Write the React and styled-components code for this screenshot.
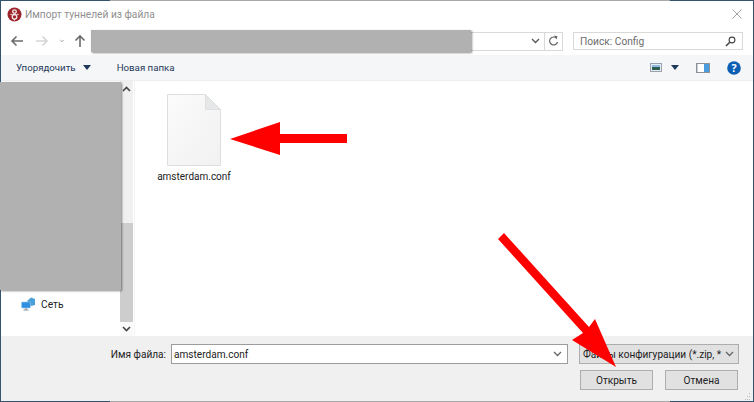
import React from 'react';
import styled, { createGlobalStyle } from 'styled-components';

const Global = createGlobalStyle`
  html, body { margin: 0; padding: 0; background: #34536f; }
  body { font-family: "Roboto", "Open Sans", sans-serif; }
`;

const Screen = styled.div`
  position: relative;
  width: 754px;
  height: 402px;
  overflow: hidden;
  padding: 1px;
  box-sizing: border-box;
  background: linear-gradient(to right, #34536f 110px, #a9a9a9 110px, #a9a9a9 670px, #34536f 670px);
`;

const Dialog = styled.div`
  display: flex;
  flex-direction: column;
  width: 752px;
  height: 400px;
  background: #fff;
`;

const TitleBar = styled.div`
  display: flex;
  align-items: center;
  height: 26px;
  flex: none;
  padding: 0 11px 0 6px;
  gap: 3px;
  font-size: 10.2px;
  color: #8f8f8f;
`;

const TitleText = styled.span`
  flex: 1;
`;

const NavRow = styled.div`
  display: flex;
  align-items: center;
  height: 28px;
  flex: none;
  padding: 0 10px 0 9px;
`;

const NavIcons = styled.div`
  display: flex;
  align-items: center;
  width: 81px;
  flex: none;
`;

const NavSlot = styled.span`
  display: flex;
  justify-content: center;
  box-sizing: border-box;
  width: ${p => p.$w}px;
  padding-left: ${p => p.$shift || 0}px;
`;

const AddressBar = styled.div`
  display: flex;
  justify-content: flex-end;
  align-items: center;
  width: 470px;
  flex: none;
  height: 17px;
  border: 1px solid #d9d9d9;
  background: #fff;
`;

const AddressButton = styled.span`
  display: flex;
  align-items: center;
  justify-content: center;
  width: ${p => p.$w}px;
  height: 17px;
  border-left: ${p => (p.$line ? '1px solid #d9d9d9' : 'none')};
`;

const SearchBox = styled.div`
  display: flex;
  align-items: center;
  justify-content: space-between;
  box-sizing: border-box;
  width: 171px;
  height: 18px;
  margin-left: 10px;
  padding: 0 6px;
  border: 1px solid #d9d9d9;
  font-size: 10.2px;
  color: #6d6d6d;
`;

const Toolbar = styled.div`
  display: flex;
  align-items: center;
  flex: none;
  box-sizing: border-box;
  height: 26px;
  padding: 0 12px 0 15px;
  background: #f5f6f7;
  border-bottom: 1px solid #eceef0;
  font-size: 9.7px;
  color: #1e395b;
`;

const ToolLabel = styled.span`
  display: flex;
  align-items: center;
  gap: 7px;
  margin-right: ${p => p.$gap || 0}px;
`;

const ToolIcons = styled.div`
  display: flex;
  align-items: center;
  margin-left: auto;
`;

const ToolArrow = styled.svg`
  margin: ${p => p.$margin || 0};
`;

const HelpGap = styled.span`
  width: 17px;
`;

const Body = styled.div`
  display: flex;
  flex: 1;
  min-height: 0;
`;

const Sidebar = styled.div`
  display: flex;
  flex-direction: column;
  justify-content: flex-end;
  width: 119px;
  flex: none;
  padding: 0 0 25px 20px;
  box-sizing: border-box;
`;

const TreeItem = styled.div`
  display: flex;
  align-items: center;
  gap: 5px;
  font-size: 10.2px;
  color: #222;
`;

const ScrollBar = styled.div`
  display: flex;
  flex-direction: column;
  width: 13px;
  flex: none;
  background: #f0f0f0;
`;

const ScrollEnd = styled.div`
  display: flex;
  align-items: center;
  justify-content: center;
  height: ${p => p.$h}px;
  flex: none;
  background: ${p => p.$bg || 'transparent'};
`;

const ScrollTrack = styled.div`
  flex: 1;
  padding-top: ${p => p.$top}px;
`;

const ScrollThumb = styled.div`
  height: 100%;
  background: #cdcdcd;
`;

const Files = styled.div`
  flex: 1;
  margin-left: 1px;
  padding: 13px 0 0 21px;
  border-left: 1px solid #f4f4f4;
`;

const FileTile = styled.div`
  display: flex;
  flex-direction: column;
  align-items: center;
  width: 76px;
  gap: 5px;
  font-size: 10px;
  color: #222;
`;

const Footer = styled.div`
  position: relative;
  display: flex;
  flex-direction: column;
  flex: none;
  box-sizing: border-box;
  height: 65px;
  padding: 8px 14px 0 0;
  background: #f0f0f0;
  align-items: flex-end;
  gap: 6px;
`;

const FooterRow = styled.div`
  display: flex;
  align-items: center;
  gap: ${p => p.$gap}px;
  margin-right: ${p => p.$right || 0}px;
  font-size: 10.1px;
  color: #222;
`;

const NameInput = styled.div`
  display: flex;
  align-items: center;
  justify-content: space-between;
  box-sizing: border-box;
  width: 397px;
  height: 20px;
  margin-left: -6px;
  padding: 0 5px 0 2px;
  background: #fff;
  border: 1px solid #9c9c9c;
`;

const TypeSelect = styled.div`
  display: flex;
  align-items: center;
  justify-content: space-between;
  box-sizing: border-box;
  width: 160px;
  height: 20px;
  padding: 0 4px 0 3px;
  background: #e1e1e1;
  border: 1px solid #adadad;
  white-space: nowrap;
`;

const DialogButton = styled.div`
  display: flex;
  align-items: center;
  justify-content: center;
  box-sizing: border-box;
  width: ${p => p.$w}px;
  height: 20px;
  background: #e1e1e1;
  border: 1px solid #adadad;
`;

const Grip = styled.svg`
  position: absolute;
  right: 2px;
  bottom: 1px;
`;

const Redaction = styled.div`
  position: absolute;
  left: ${p => p.$x}px;
  top: ${p => p.$y}px;
  width: ${p => p.$w}px;
  height: ${p => p.$h}px;
  background: #b1b1b1;
  box-shadow: 1px 1px 2px rgba(0, 0, 0, 0.45);
`;

const Overlay = styled.svg`
  position: absolute;
  left: 0;
  top: 0;
`;

const Chevron = ({ up, color = '#555', weight = 1.3 }) => (
  <svg width="9" height="6" viewBox="0 0 9 6">
    <path d={up ? 'M1 5l3.5-3.5L8 5' : 'M1 1l3.5 3.5L8 1'} fill="none" stroke={color} strokeWidth={weight} />
  </svg>
);

const AppLogo = () => (
  <svg width="15" height="15" viewBox="0 0 15 15">
    <circle cx="7.5" cy="7.5" r="7" fill="#9c2329" />
    <circle cx="7.5" cy="4.6" r="1.8" fill="none" stroke="#f3e6e6" strokeWidth="1.3" />
    <circle cx="7.5" cy="9.8" r="2.3" fill="none" stroke="#f3e6e6" strokeWidth="1.3" />
    <path d="M3.4 7.4h1.8M9.8 7.4h1.8M7.5 12v1.5" stroke="#f3e6e6" strokeWidth="1" />
  </svg>
);

const ArrowIcon = ({ dir, color }) => {
  const d = {
    left: 'M13 7H2M6.5 2.5L2 7l4.5 4.5',
    right: 'M1 7h11M7.5 2.5L12 7l-4.5 4.5',
    up: 'M7 13V2M2.5 6.5L7 2l4.5 4.5',
  }[dir];
  return (
    <svg width="14" height="14" viewBox="0 0 14 14">
      <path d={d} fill="none" stroke={color} strokeWidth="1.6" />
    </svg>
  );
};

const RefreshIcon = () => (
  <svg width="11" height="12" viewBox="0 0 11 12">
    <path d="M8.5 3.2A4 4 0 1 0 9.5 7" fill="none" stroke="#666" strokeWidth="1.2" />
    <path d="M5.8 0.6l3.6.6-.6 3.4z" fill="#666" />
  </svg>
);

const SearchIcon = () => (
  <svg width="11" height="11" viewBox="0 0 11 11">
    <circle cx="7" cy="4" r="2.9" fill="none" stroke="#444" strokeWidth="1.1" />
    <path d="M4.8 6.2L1 10" stroke="#444" strokeWidth="1.6" />
  </svg>
);

const ViewIcon = () => (
  <svg width="12" height="9" viewBox="0 0 12 9">
    <rect x="0.5" y="0.5" width="11" height="8" fill="#e8eef4" stroke="#98a3ae" />
    <rect x="2" y="2" width="8" height="2" fill="#8dbce2" />
    <rect x="2" y="4" width="8" height="3" fill="#2f5f52" />
  </svg>
);

const PreviewIcon = () => (
  <svg width="14" height="10" viewBox="0 0 14 10">
    <rect x="0.5" y="0.5" width="13" height="9" fill="#fff" stroke="#8c9297" />
    <rect x="8" y="1" width="5" height="8" fill="#4a9be0" />
    <rect x="1" y="1" width="1" height="8" fill="#c5ced6" />
  </svg>
);

const HelpIcon = () => (
  <svg width="14" height="14" viewBox="0 0 15 15">
    <circle cx="7.5" cy="7.5" r="7.3" fill="#0d5fb5" />
    <text x="7.5" y="11.6" textAnchor="middle" fontSize="11.5" fontWeight="700" fontFamily="Open Sans, sans-serif" fill="#fff">?</text>
  </svg>
);

const NetworkIcon = () => (
  <svg width="15" height="14" viewBox="0 0 15 14">
    <path d="M6 4l4-3.5 4 1.5v6l-4 1z" fill="#4d9fd8" />
    <rect x="0.5" y="5" width="9" height="6" rx="1" fill="#2f8fe0" stroke="#9ccbed" strokeWidth="0.6" />
    <path d="M2.5 13h5M5 11v2" stroke="#8a8f95" strokeWidth="1.2" />
  </svg>
);

const FileIcon = () => (
  <svg width="54" height="72" viewBox="0 0 54 72">
    <defs>
      <linearGradient id="sheet" x1="0" y1="0" x2="1" y2="1">
        <stop offset="0" stopColor="#fbfbfb" />
        <stop offset="1" stopColor="#f1f1f2" />
      </linearGradient>
    </defs>
    <path d="M.5.5h38l15 15v56H.5z" fill="url(#sheet)" stroke="#dedede" />
    <path d="M38.5.5v15h15z" fill="#e6e7e8" stroke="#d8d8d8" strokeWidth="0.7" />
  </svg>
);

const App = () => (
  <Screen>
    <Global />
    <Dialog>
      <TitleBar>
        <AppLogo />
        <TitleText>Импорт туннелей из файла</TitleText>
        <svg width="10" height="10" viewBox="0 0 10 10">
          <path d="M.5.5l9 9M9.5.5l-9 9" stroke="#9a9a9a" strokeWidth="0.9" />
        </svg>
      </TitleBar>
      <NavRow>
        <NavIcons>
          <NavSlot $w={14}><ArrowIcon dir="left" color="#6b6b6b" /></NavSlot>
          <NavSlot $w={36}><ArrowIcon dir="right" color="#d5d5d5" /></NavSlot>
          <NavSlot $w={4}><Chevron color="#555" /></NavSlot>
          <NavSlot $w={27} $shift={5}><ArrowIcon dir="up" color="#6b6b6b" /></NavSlot>
        </NavIcons>
        <AddressBar>
          <AddressButton $w={18}><Chevron color="#555" /></AddressButton>
          <AddressButton $w={17} $line><RefreshIcon /></AddressButton>
        </AddressBar>
        <SearchBox>
          <span>Поиск: Config</span>
          <SearchIcon />
        </SearchBox>
      </NavRow>
      <Toolbar>
        <ToolLabel $gap={26}>
          Упорядочить
          <svg width="8" height="5" viewBox="0 0 8 5"><path d="M0 0h8L4 5z" fill="#1e395b" /></svg>
        </ToolLabel>
        <ToolLabel>Новая папка</ToolLabel>
        <ToolIcons>
          <ViewIcon />
          <ToolArrow $margin="0 17px 0 9px" width="8" height="5" viewBox="0 0 8 5"><path d="M0 0h8L4 5z" fill="#1e395b" /></ToolArrow>
          <PreviewIcon />
          <HelpGap />
          <HelpIcon />
        </ToolIcons>
      </Toolbar>
      <Body>
        <Sidebar>
          <TreeItem>
            <NetworkIcon />
            Сеть
          </TreeItem>
        </Sidebar>
        <ScrollBar>
          <ScrollEnd $h={16}><Chevron up color="#444" weight={1.6} /></ScrollEnd>
          <ScrollTrack $top={126}><ScrollThumb /></ScrollTrack>
          <ScrollEnd $h={14} $bg="#fafafa"><Chevron color="#444" weight={1.6} /></ScrollEnd>
        </ScrollBar>
        <Files>
          <FileTile>
            <FileIcon />
            amsterdam.conf
          </FileTile>
        </Files>
      </Body>
      <Footer>
        <FooterRow $gap={11}>
          <span>Имя файла:</span>
          <NameInput>
            amsterdam.conf
            <Chevron color="#666" />
          </NameInput>
          <TypeSelect>
            Файлы конфигурации (*.zip, *
            <Chevron color="#666" />
          </TypeSelect>
        </FooterRow>
        <FooterRow $gap={12} $right={1}>
          <DialogButton $w={73}>Открыть</DialogButton>
          <DialogButton $w={73}>Отмена</DialogButton>
        </FooterRow>
        <Grip width="6" height="7" viewBox="0 0 6 7">
          <path d="M4 0h1v1H4zM2 3h1v1H2zM4 3h1v1H4zM0 6h1v1H0zM2 6h1v1H2zM4 6h1v1H4z" fill="#b9b9b9" />
        </Grip>
      </Footer>
    </Dialog>
    <Redaction $x={91} $y={30} $w={380} $h={22} />
    <Redaction $x={0} $y={82} $w={121} $h={208} />
    <Overlay width="754" height="402" viewBox="0 0 754 402">
      <polygon points="230,139 280,122 280,134 347,134 347,143 280,143 280,155" fill="#fe0000" />
      <polygon points="504,233 498,239 583,333 572,340 616,367 595,319 589,327" fill="#fe0000" />
    </Overlay>
  </Screen>
);

export default App;
